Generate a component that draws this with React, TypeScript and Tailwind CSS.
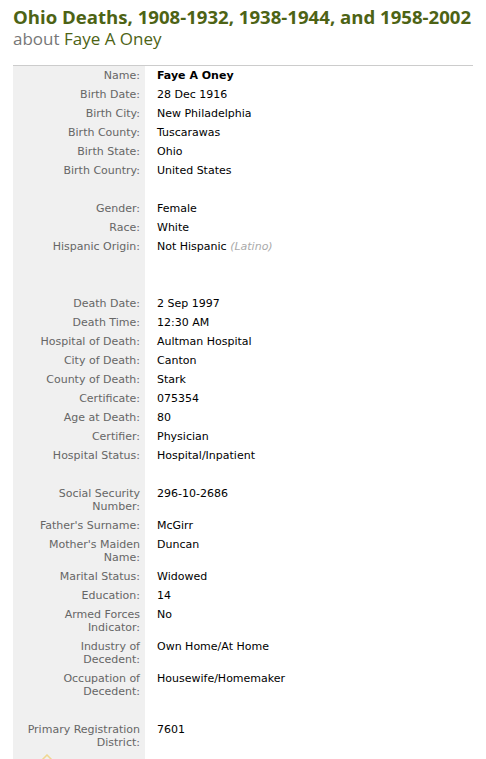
const rows: ([string, string] | null)[] = [
    ["Name:", "Faye A Oney"],
    ["Birth Date:", "28 Dec 1916"],
    ["Birth City:", "New Philadelphia"],
    ["Birth County:", "Tuscarawas"],
    ["Birth State:", "Ohio"],
    ["Birth Country:", "United States"],
    null,
    ["Gender:", "Female"],
    ["Race:", "White"],
    ["Hispanic Origin:", "Not Hispanic"],
    null,
    null,
    ["Death Date:", "2 Sep 1997"],
    ["Death Time:", "12:30 AM"],
    ["Hospital of Death:", "Aultman Hospital"],
    ["City of Death:", "Canton"],
    ["County of Death:", "Stark"],
    ["Certificate:", "075354"],
    ["Age at Death:", "80"],
    ["Certifier:", "Physician"],
    ["Hospital Status:", "Hospital/Inpatient"],
    null,
    ["Social Security Number:", "296-10-2686"],
    ["Father's Surname:", "McGirr"],
    ["Mother's Maiden Name:", "Duncan"],
    ["Marital Status:", "Widowed"],
    ["Education:", "14"],
    ["Armed Forces Indicator:", "No"],
    ["Industry of Decedent:", "Own Home/At Home"],
    ["Occupation of Decedent:", "Housewife/Homemaker"],
    null,
    ["Primary Registration District:", "7601"],
]

export default function App() {
    return (
        <div className="bg-white w-[486px] h-[759px] overflow-hidden pl-[13px] pt-[5px] font-['DejaVu_Sans',sans-serif]">
            <h1 className="text-[18.6px] leading-[23px] font-bold text-[#4d6315] font-['Open_Sans',sans-serif] whitespace-nowrap">
                Ohio Deaths, 1908-1932, 1938-1944, and 1958-2002
            </h1>
            <div className="text-[17px] leading-[22px] text-[#777] font-['Open_Sans',sans-serif]">
                about <span className="text-[#4d6315]">Faye A Oney</span>
            </div>

            <div className="mt-[15px] w-[460px] border-t border-[#cccccc]">
                <table className="w-full border-collapse text-[11px] leading-[13px]">
                    <tbody>
                        {rows.map((row, i) => (
                            <tr key={i}>
                                <td className="w-[132px] bg-[#f0f0f0] text-right text-[#666] align-top py-[3px] pr-[5px] pl-[8px] h-[19px]">
                                    {row ? row[0] : ""}
                                </td>
                                <td className="align-top py-[3px] pl-[12px] text-[#000]">
                                    {row && i === 0 && <b>{row[1]}</b>}
                                    {row && i !== 0 && row[1]}
                                    {row && row[0] === "Hispanic Origin:" && (
                                        <span className="italic text-[#aaa]"> (Latino)</span>
                                    )}
                                </td>
                            </tr>
                        ))}
                        <tr>
                            <td className="bg-[#f0f0f0] h-[13px] relative">
                                <svg className="absolute left-[27px] top-[2px]" width="14" height="8" viewBox="0 0 14 8">
                                    <path d="M1 7 L7 1 L13 7" fill="none" stroke="#f0d890" strokeWidth="1.5" />
                                </svg>
                            </td>
                            <td />
                        </tr>
                    </tbody>
                </table>
            </div>
        </div>
    )
}
